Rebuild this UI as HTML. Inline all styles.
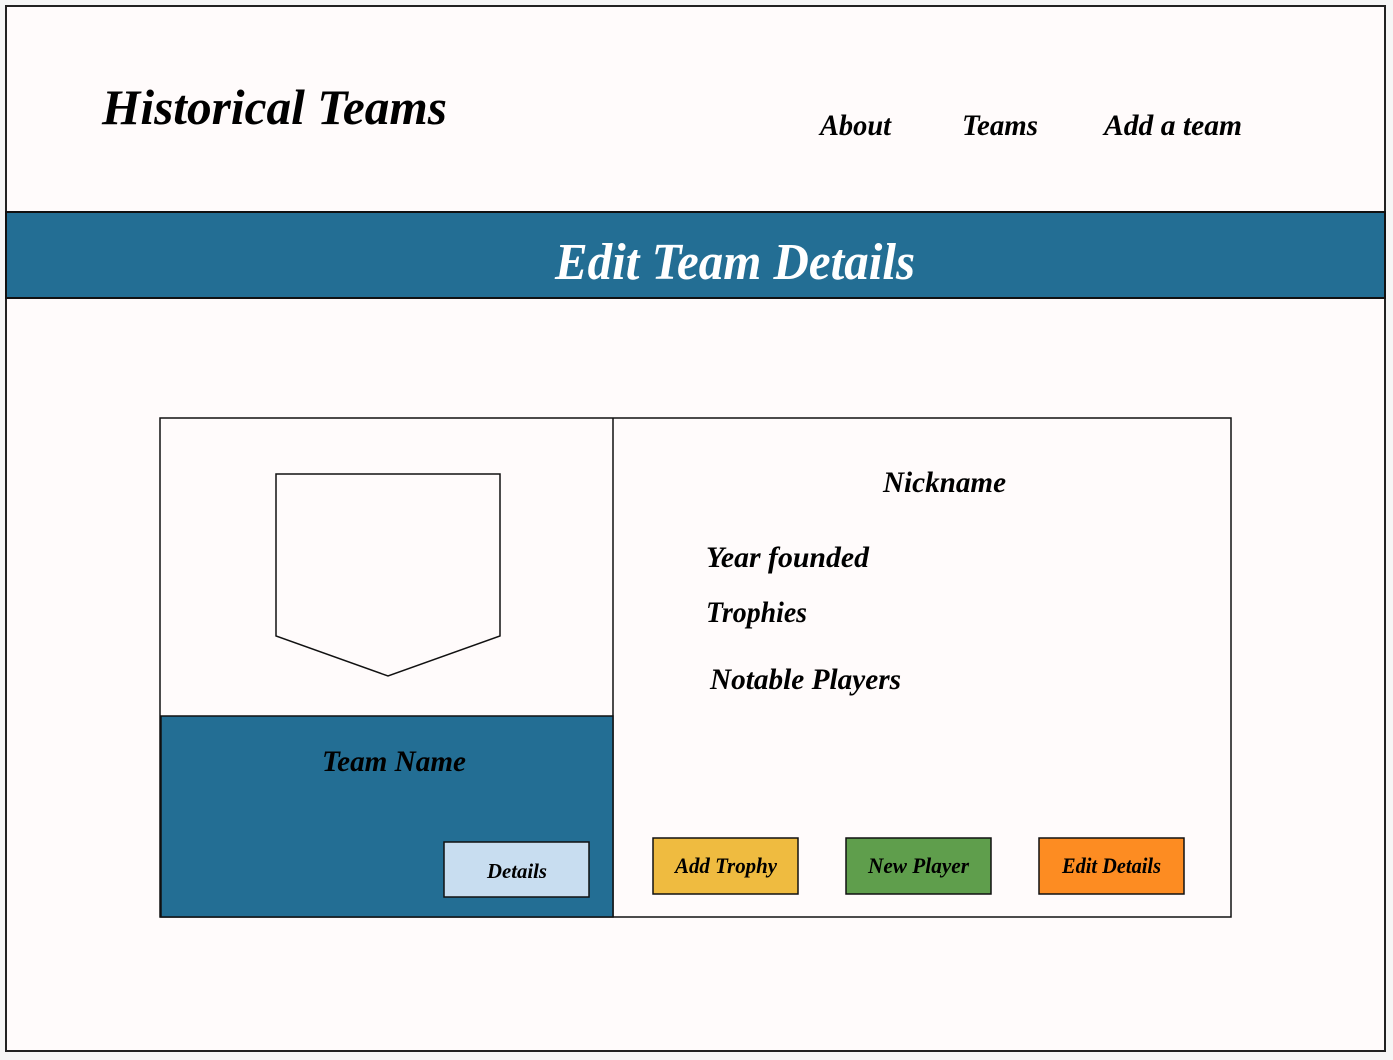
<!DOCTYPE html>
<html><head><style>html,body{margin:0;padding:0;background:#fdfbfb;}svg{display:block}text{font-family:"Liberation Serif",serif;font-weight:bold;font-style:italic;}</style></head>
<body>
<svg width="1393" height="1060" viewBox="0 0 1393 1060" xmlns="http://www.w3.org/2000/svg">
<rect x="0" y="0" width="1393" height="1060" fill="#f6f6f6"/>
<rect x="6" y="6" width="1379" height="1045" fill="#fffbfb" stroke="#222" stroke-width="2"/>
<text x="102" y="124" font-size="50" textLength="345" lengthAdjust="spacingAndGlyphs">Historical Teams</text>
<text x="820" y="135" font-size="30" textLength="71" lengthAdjust="spacingAndGlyphs">About</text>
<text x="962" y="135" font-size="30" textLength="76" lengthAdjust="spacingAndGlyphs">Teams</text>
<text x="1104" y="135" font-size="30" textLength="138" lengthAdjust="spacingAndGlyphs">Add a team</text>
<rect x="6" y="212" width="1379" height="86" fill="#236e94" stroke="#111" stroke-width="2"/>
<text x="555" y="279" font-size="52" fill="#fff" textLength="360" lengthAdjust="spacingAndGlyphs">Edit Team Details</text>
<rect x="160" y="418" width="1071" height="499" fill="#fffbfb" stroke="#111" stroke-width="1.5"/>
<line x1="613" y1="418" x2="613" y2="917" stroke="#111" stroke-width="1.5"/>
<rect x="161" y="716" width="452" height="201" fill="#236e94" stroke="#111" stroke-width="1.5"/>
<polygon points="276,474 500,474 500,636 388,676 276,636" fill="#fffbfb" stroke="#111" stroke-width="1.5"/>
<text x="322" y="771" font-size="30" textLength="144" lengthAdjust="spacingAndGlyphs">Team Name</text>
<rect x="444" y="842" width="145" height="55" fill="#c8ddf0" stroke="#111" stroke-width="1.5"/>
<text x="487" y="878" font-size="21" textLength="60" lengthAdjust="spacingAndGlyphs">Details</text>
<text x="883" y="492" font-size="30" textLength="123" lengthAdjust="spacingAndGlyphs">Nickname</text>
<text x="706" y="567" font-size="30" textLength="163" lengthAdjust="spacingAndGlyphs">Year founded</text>
<text x="706" y="622" font-size="30" textLength="101" lengthAdjust="spacingAndGlyphs">Trophies</text>
<text x="710" y="689" font-size="30" textLength="191" lengthAdjust="spacingAndGlyphs">Notable Players</text>
<rect x="653" y="838" width="145" height="56" fill="#efbb40" stroke="#111" stroke-width="1.5"/>
<rect x="846" y="838" width="145" height="56" fill="#5f9e4c" stroke="#111" stroke-width="1.5"/>
<rect x="1039" y="838" width="145" height="56" fill="#fd8c22" stroke="#111" stroke-width="1.5"/>
<text x="675" y="873" font-size="22" textLength="102" lengthAdjust="spacingAndGlyphs">Add Trophy</text>
<text x="868" y="873" font-size="22" textLength="101" lengthAdjust="spacingAndGlyphs">New Player</text>
<text x="1062" y="873" font-size="22" textLength="99" lengthAdjust="spacingAndGlyphs">Edit Details</text>
</svg>
</body></html>
